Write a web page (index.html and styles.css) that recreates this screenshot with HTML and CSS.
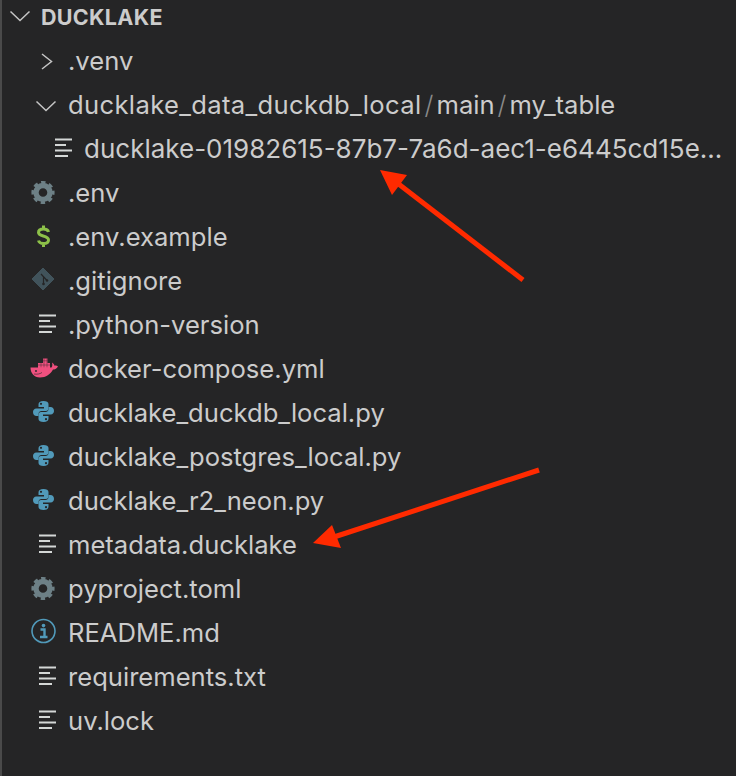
FILE: index.html
```html
<!DOCTYPE html>
<html lang="en">
<head>
    <meta charset="UTF-8">
    <meta name="viewport" content="width=device-width, initial-scale=1.0">
    <title>Explorer</title>
    <link rel="stylesheet" href="styles.css">
</head>
<body>
    <svg class="sprite" xmlns="http://www.w3.org/2000/svg">
        <symbol id="chevron-right" viewBox="0 0 30 30">
            <path d="M14 8 L23.5 15.5 L14 23" fill="none" stroke="#c5c5c5" stroke-width="1.5"/>
        </symbol>
        <symbol id="chevron-down" viewBox="0 0 30 30">
            <path d="M8.5 11.5 L18 20.5 L27.5 11.5" fill="none" stroke="#c5c5c5" stroke-width="1.5"/>
        </symbol>
        <symbol id="lines" viewBox="0 0 30 30">
            <path d="M11 5.5 H28 M11 11 H22 M11 16.5 H28 M11 22 H24" fill="none" stroke="#d4d7d6" stroke-width="1.8"/>
        </symbol>
        <symbol id="gear" viewBox="0 0 30 30">
            <circle cx="15" cy="14.5" r="7" fill="none" stroke="#6d8086" stroke-width="5.4"/>
            <circle cx="15" cy="14.5" r="10.2" fill="none" stroke="#6d8086" stroke-width="2.8" stroke-dasharray="4.4 3.61" stroke-dashoffset="2.2"/>
        </symbol>
        <symbol id="dollar" viewBox="0 0 30 30">
            <path d="M20.5 10 C20 8 18 7 15.5 7 C12 7 10.5 8.6 10.5 10.6 C10.5 15.2 20.5 12.6 20.5 18 C20.5 20 19 21.5 15.5 21.5 C13 21.5 11 20.5 10.5 18.5 M15.5 3.5 V7 M15.5 21.5 V25" fill="none" stroke="#8dc149" stroke-width="3"/>
        </symbol>
        <symbol id="git" viewBox="0 0 30 30">
            <path d="M15 2 L26 13 L15 24 L4 13 Z" fill="#41535b" stroke="#41535b" stroke-width="1" stroke-linejoin="round"/>
            <path d="M13 8 L19 14.5 M15.5 11 V18" fill="none" stroke="#252526" stroke-width="1.2"/>
            <circle cx="15.5" cy="18" r="1.3" fill="#252526"/>
            <circle cx="19" cy="14.5" r="1.3" fill="#252526"/>
        </symbol>
        <symbol id="docker" viewBox="0 0 30 30">
            <path d="M10 9 H22 V14 H10 Z M15 4.5 H19.5 V9 H15 Z" fill="#f0507f"/>
            <path d="M13 9 V13.5 M16 4.5 V13.5 M19 4.5 V13.5 M10 11 H22 M15 6.8 H19.5" fill="none" stroke="#252526" stroke-width="0.4"/>
            <path d="M2.5 13.5 H23.5 C24.5 12 24.5 10.8 24 8.5 C25.5 9.2 26.2 10.6 26.5 11.8 C28 11.3 29 11.8 30 12.5 C28.5 15 26.5 15.5 25 15.5 C22.5 20 18 23.5 12 23.5 C6 23.5 2.5 19 2.5 13.5 Z" fill="#f0507f"/>
            <circle cx="8" cy="17" r="0.9" fill="#252526"/>
            <path d="M6 20 C9 20.5 12 20 14 18.5" fill="none" stroke="#252526" stroke-width="0.6"/>
        </symbol>
        <symbol id="python" viewBox="0 0 30 30">
            <g id="python-half">
                <path d="M15.5 3 C12 3 10.5 4.2 10.5 6.5 V9 H16 V10.5 H8.5 C6 10.5 5 12.5 5 14 C5 16.5 6.5 18 8.5 18 H10.5 V16 C10.5 14.2 12 13 13.5 13 H18 C19.5 13 20.5 12 20.5 10.5 V6 C20.5 4 18.5 3 15.5 3 Z" fill="#519aba"/>
                <circle cx="13" cy="5.8" r="1.1" fill="#252526"/>
            </g>
            <use href="#python-half" transform="rotate(180 15.5 13.5)"/>
        </symbol>
        <symbol id="info" viewBox="0 0 30 30">
            <circle cx="15.5" cy="13" r="11.5" fill="none" stroke="#519aba" stroke-width="1.6"/>
            <circle cx="15.5" cy="7.6" r="1.8" fill="#519aba"/>
            <path d="M12.5 11.5 H16.5 V18.5 M12 19 H19.5" fill="none" stroke="#519aba" stroke-width="2.4"/>
        </symbol>
    </svg>

    <div class="explorer">
        <div class="title-row">
            <svg class="icon"><use href="#chevron-down" x="-3" y="-3"/></svg>
            <span class="title">DUCKLAKE</span>
        </div>
        <ul class="tree">
            <li class="row"><svg class="icon"><use href="#chevron-right"/></svg><span class="name">.venv</span></li>
            <li class="row"><svg class="icon"><use href="#chevron-down"/></svg><span class="name"><span class="path">ducklake_data_duckdb_local</span><span class="sep">/</span>main<span class="sep">/</span>my_table</span></li>
            <li class="row nested"><svg class="icon"><use href="#lines"/></svg><span class="name long">ducklake-01982615-87b7-7a6d-aec1-e6445cd15e...</span></li>
            <li class="row"><svg class="icon"><use href="#gear"/></svg><span class="name">.env</span></li>
            <li class="row"><svg class="icon"><use href="#dollar"/></svg><span class="name">.env.example</span></li>
            <li class="row"><svg class="icon"><use href="#git"/></svg><span class="name">.gitignore</span></li>
            <li class="row"><svg class="icon"><use href="#lines"/></svg><span class="name">.python-version</span></li>
            <li class="row"><svg class="icon"><use href="#docker"/></svg><span class="name">docker-compose.yml</span></li>
            <li class="row"><svg class="icon"><use href="#python"/></svg><span class="name">ducklake_duckdb_local.py</span></li>
            <li class="row"><svg class="icon"><use href="#python"/></svg><span class="name">ducklake_postgres_local.py</span></li>
            <li class="row"><svg class="icon"><use href="#python"/></svg><span class="name">ducklake_r2_neon.py</span></li>
            <li class="row"><svg class="icon"><use href="#lines"/></svg><span class="name">metadata.ducklake</span></li>
            <li class="row"><svg class="icon"><use href="#gear"/></svg><span class="name">pyproject.toml</span></li>
            <li class="row"><svg class="icon"><use href="#info"/></svg><span class="name">README.md</span></li>
            <li class="row"><svg class="icon"><use href="#lines"/></svg><span class="name">requirements.txt</span></li>
            <li class="row"><svg class="icon"><use href="#lines"/></svg><span class="name">uv.lock</span></li>
        </ul>

        <!-- red annotation arrows drawn over the tree -->
        <svg class="arrows" viewBox="0 0 736 776">
            <path d="M523 280 L396 182" stroke="#ff2a00" stroke-width="5" fill="none"/>
            <path d="M380 170 L407 175 L392 195 Z" fill="#ff2a00"/>
            <path d="M539 470 L334 537" stroke="#ff2a00" stroke-width="5" fill="none"/>
            <path d="M313 543 L332 525 L341 548 Z" fill="#ff2a00"/>
        </svg>
    </div>
</body>
</html>
```

FILE: styles.css
```css
html, body {
    margin: 0;
    padding: 0;
    height: 100%;
}
body {
    background-color: #252526;
    font-family: Inter, 'Noto Sans', sans-serif;
    color: #cccccc;
    overflow: hidden;
}
.sprite {
    display: none;
}
.explorer {
    position: relative;
    box-sizing: border-box;
    height: 776px;
    border-left: 2px solid #4a4a4a;
}
.title-row {
    display: flex;
    align-items: center;
    height: 36px;
    margin-bottom: 3px;
    padding-left: 3px;
}
.title-row .icon {
    margin-right: 6px;
}
.title {
    font-size: 21.5px;
    font-weight: 700;
    letter-spacing: 0.3px;
    margin-bottom: 2px;
}
.tree {
    list-style: none;
    margin: 0;
    padding: 0;
}
.row {
    display: flex;
    align-items: center;
    height: 44px;
    padding-left: 26px;
}
.row.nested {
    padding-left: 42px;
}
.icon {
    flex: none;
    width: 30px;
    height: 30px;
    margin-right: 10px;
}
.name {
    font-size: 25.6px;
    white-space: nowrap;
    margin-bottom: 2px;
}
.name.long {
    font-size: 26px;
}
.path {
    letter-spacing: 0.35px;
}
.sep {
    color: #8a8a8a;
    font-weight: 300;
    margin: 0 3px;
}
.arrows {
    position: absolute;
    top: 0;
    left: -2px;
    width: 736px;
    height: 776px;
    pointer-events: none;
}
```
